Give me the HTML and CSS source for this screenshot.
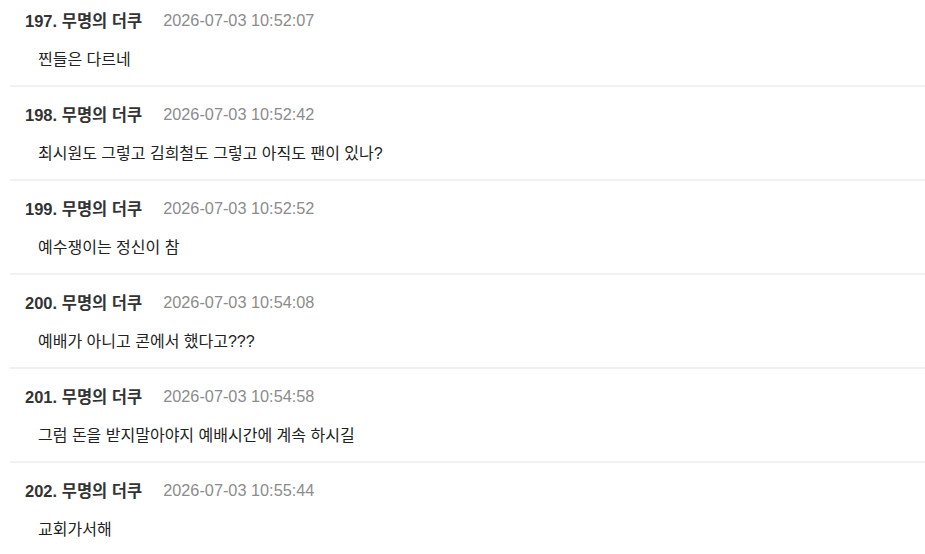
FILE: index.html
```html
<!DOCTYPE html>
<html lang="ko">
<head>
    <meta charset="UTF-8">
    <meta name="viewport" content="width=device-width, initial-scale=1.0">
    <title>댓글</title>
    <link rel="stylesheet" href="styles.css">
</head>
<body>
    <ul class="comment-list">
        <li class="comment">
            <div class="comment-head">
                <span class="comment-author">197. 무명의 더쿠</span>
                <span class="comment-date">2026-07-03 10:52:07</span>
            </div>
            <p class="comment-body">찐들은 다르네</p>
        </li>
        <li class="comment">
            <div class="comment-head">
                <span class="comment-author">198. 무명의 더쿠</span>
                <span class="comment-date">2026-07-03 10:52:42</span>
            </div>
            <p class="comment-body">최시원도 그렇고 김희철도 그렇고 아직도 팬이 있나?</p>
        </li>
        <li class="comment">
            <div class="comment-head">
                <span class="comment-author">199. 무명의 더쿠</span>
                <span class="comment-date">2026-07-03 10:52:52</span>
            </div>
            <p class="comment-body">예수쟁이는 정신이 참</p>
        </li>
        <li class="comment">
            <div class="comment-head">
                <span class="comment-author">200. 무명의 더쿠</span>
                <span class="comment-date">2026-07-03 10:54:08</span>
            </div>
            <p class="comment-body">예배가 아니고 콘에서 했다고???</p>
        </li>
        <li class="comment">
            <div class="comment-head">
                <span class="comment-author">201. 무명의 더쿠</span>
                <span class="comment-date">2026-07-03 10:54:58</span>
            </div>
            <p class="comment-body">그럼 돈을 받지말아야지 예배시간에 계속 하시길</p>
        </li>
        <li class="comment">
            <div class="comment-head">
                <span class="comment-author">202. 무명의 더쿠</span>
                <span class="comment-date">2026-07-03 10:55:44</span>
            </div>
            <p class="comment-body">교회가서해</p>
        </li>
    </ul>
</body>
</html>
```

FILE: styles.css
```css
* {
    box-sizing: border-box;
    margin: 0;
    padding: 0;
}

body {
    background: #fff;
    font-family: "Liberation Sans", "Noto Sans CJK KR", sans-serif;
    color: #222;
    overflow: hidden;
}

.comment-list {
    list-style: none;
    margin-top: -7px;
}

.comment {
    margin-left: 10px;
    padding: 17px 0 15px 15px;
    border-bottom: 2px solid #f1f1f1;
}

.comment-head {
    display: flex;
    align-items: center;
    gap: 21px;
    height: 20px;
}

.comment-author {
    font-size: 16.5px;
    font-weight: bold;
    color: #333;
}

.comment-date {
    font-size: 16.3px;
    color: #8c8c8c;
}

.comment-body {
    margin-top: 20px;
    padding-left: 13px;
    font-size: 16px;
    line-height: 20px;
    color: #222;
}
```
